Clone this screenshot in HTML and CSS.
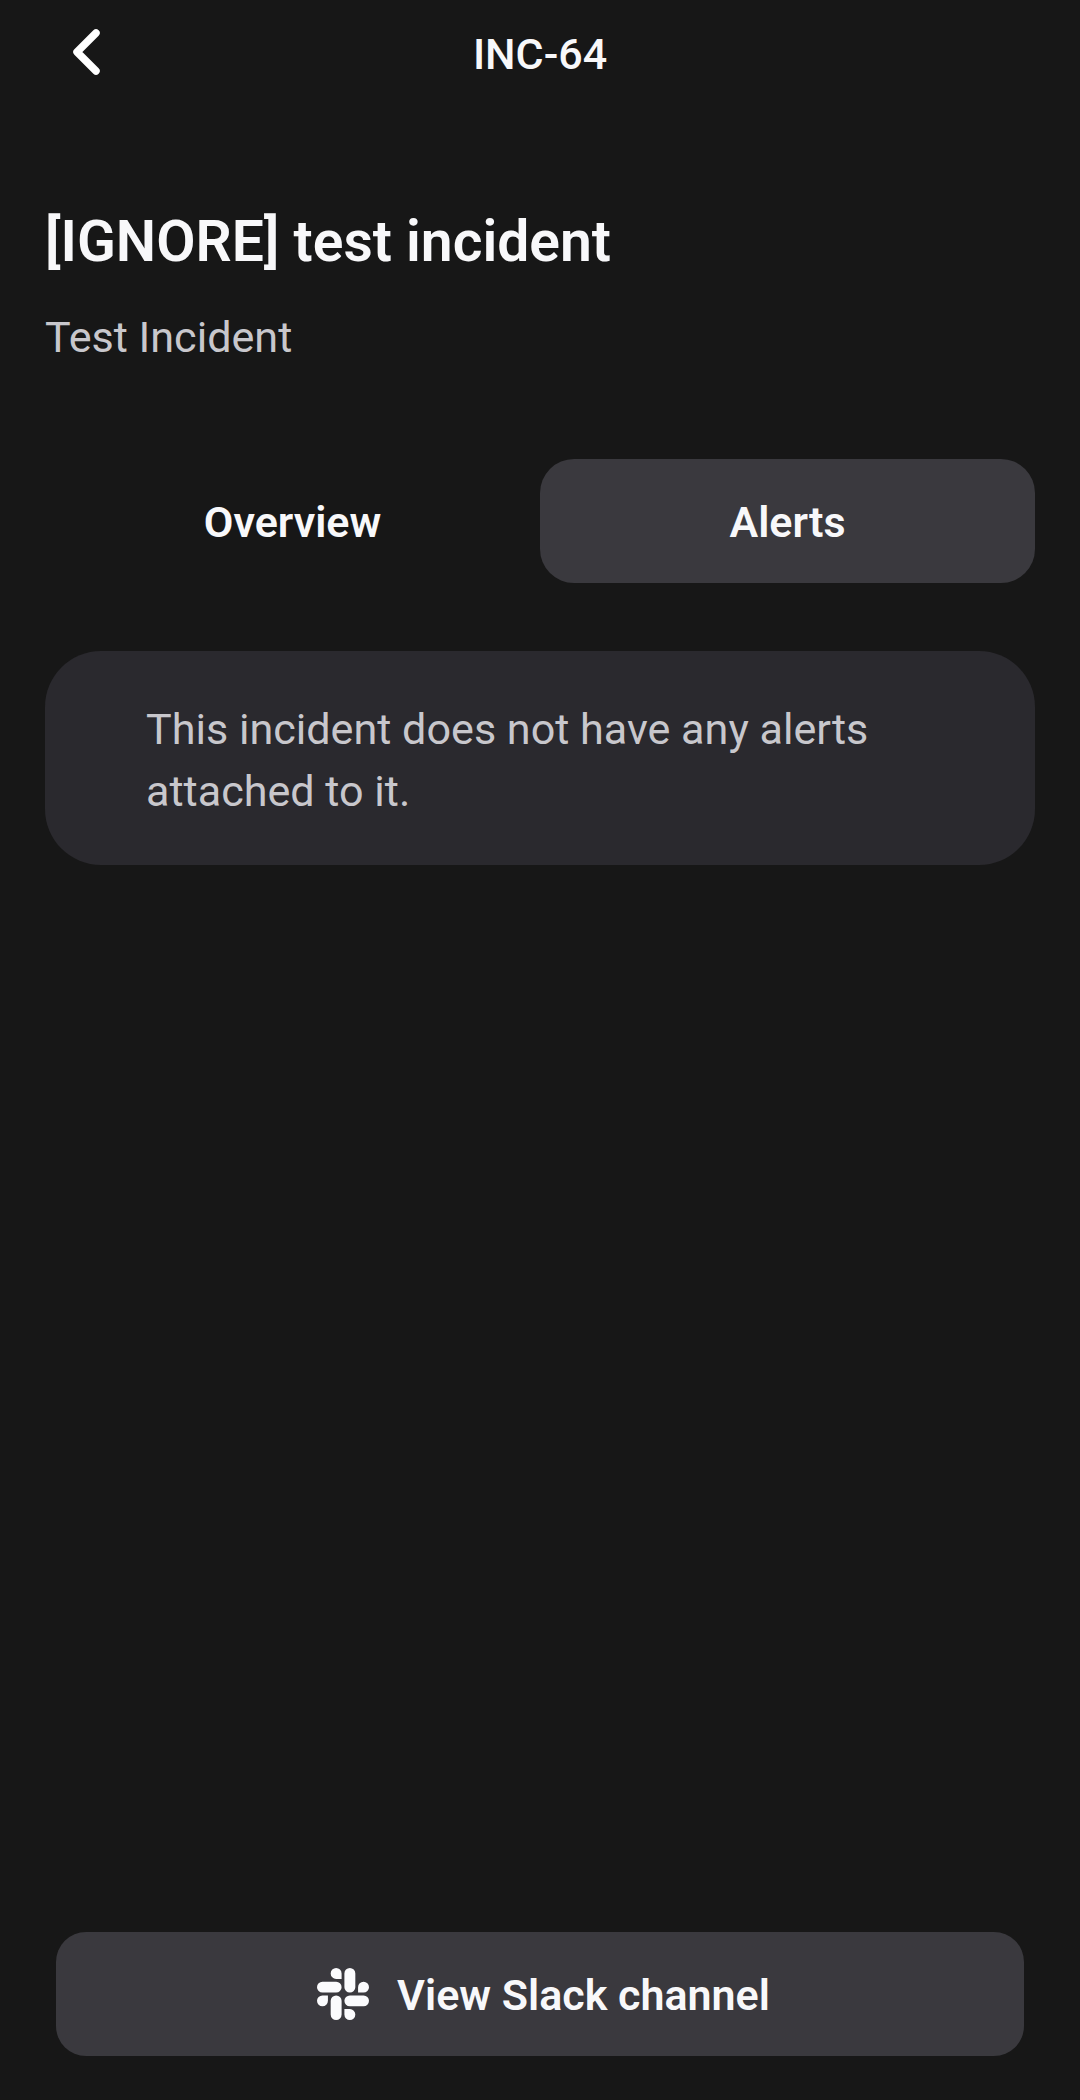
FILE: index.html
```html
<!DOCTYPE html>
<html lang="en">
<head>
<meta charset="utf-8">
<title>INC-64</title>
<link rel="stylesheet" href="styles.css">
</head>
<body>
<div class="screen">
  <header class="topbar">
    <button class="back" aria-label="Back"><svg width="40" height="52" viewBox="0 0 40 52"><path d="M34 7 15 26l19 19"/></svg></button>
    <span class="code">INC-64</span>
  </header>
  <main class="content">
    <h1 class="title">[IGNORE] test incident</h1>
    <p class="subtitle">Test Incident</p>
    <nav class="tabs">
      <button class="tab">Overview</button>
      <button class="tab active">Alerts</button>
    </nav>
    <section class="empty">This incident does not have any alerts attached to it.</section>
  </main>
  <footer class="footer">
    <button class="slack">
      <svg width="52" height="52" viewBox="0 0 24 24"><path d="M5.042 15.165a2.528 2.528 0 0 1-2.52 2.523A2.528 2.528 0 0 1 0 15.165a2.527 2.527 0 0 1 2.522-2.52h2.52v2.52zM6.313 15.165a2.527 2.527 0 0 1 2.521-2.52 2.527 2.527 0 0 1 2.521 2.52v6.313A2.528 2.528 0 0 1 8.834 24a2.528 2.528 0 0 1-2.521-2.522v-6.313zM8.834 5.042a2.528 2.528 0 0 1-2.521-2.52A2.528 2.528 0 0 1 8.834 0a2.528 2.528 0 0 1 2.521 2.522v2.52H8.834zM8.834 6.313a2.528 2.528 0 0 1 2.521 2.521 2.528 2.528 0 0 1-2.521 2.521H2.522A2.528 2.528 0 0 1 0 8.834a2.528 2.528 0 0 1 2.522-2.521h6.312zM18.956 8.834a2.528 2.528 0 0 1 2.522-2.521A2.528 2.528 0 0 1 24 8.834a2.528 2.528 0 0 1-2.522 2.521h-2.522V8.834zM17.688 8.834a2.528 2.528 0 0 1-2.523 2.521 2.527 2.527 0 0 1-2.52-2.521V2.522A2.527 2.527 0 0 1 15.165 0a2.528 2.528 0 0 1 2.523 2.522v6.312zM15.165 18.956a2.528 2.528 0 0 1 2.523 2.522A2.528 2.528 0 0 1 15.165 24a2.527 2.527 0 0 1-2.52-2.522v-2.522h2.52zM15.165 17.688a2.527 2.527 0 0 1-2.52-2.523 2.526 2.526 0 0 1 2.52-2.52h6.313A2.527 2.527 0 0 1 24 15.165a2.528 2.528 0 0 1-2.522 2.523h-6.313z"/></svg>
      <span class="label">View Slack channel</span>
    </button>
  </footer>
</div>
</body>
</html>
```
FILE: styles.css
```css
* { box-sizing: border-box; }
body { margin: 0; background: #171717; color: #f8f8fa; font-family: Roboto, sans-serif; }
button { margin: 0; padding: 0; border: 0; background: none; color: inherit; font: inherit; }
.screen { display: flex; flex-direction: column; height: 2100px; padding-top: 22px; }
.topbar { display: grid; grid-template-columns: 62px 40px 1fr 102px; align-items: center; height: 64px; }
.back { grid-column: 2; display: flex; margin-top: -4px; }
.back path { fill: none; stroke: #fff; stroke-width: 7.5; stroke-linecap: round; stroke-linejoin: round; }
.code { grid-column: 3; text-align: center; font-size: 43px; font-weight: 500; }
.content { flex: 1; padding: 120px 45px 0; }
.title { margin: 0; font-size: 57px; line-height: 72px; font-weight: 600; }
.subtitle { margin: 29px 0 0; color: #c8c7cc; font-size: 43.13px; line-height: 62px; }
.tabs { display: grid; grid-template-columns: 1fr 1fr; margin-top: 90px; }
.tab { height: 124px; padding-top: 2px; border-radius: 34px; font-size: 43px; font-weight: 600; }
.active { background: #3a393e; }
.empty { margin-top: 68px; padding: 48px 101px 42px; height: 214px; border-radius: 56px; background: #2a292e; color: #c8c7cc; font-size: 43.13px; line-height: 62px; }
.footer { padding: 0 56px 44px; }
.slack { display: flex; align-items: center; justify-content: center; gap: 28px; width: 100%; height: 124px; padding-left: 7px; border-radius: 30px; background: #3a393e; font-size: 43px; font-weight: 600; }
.slack svg { fill: #fbfbfd; }
.label { padding-top: 2px; }
```
